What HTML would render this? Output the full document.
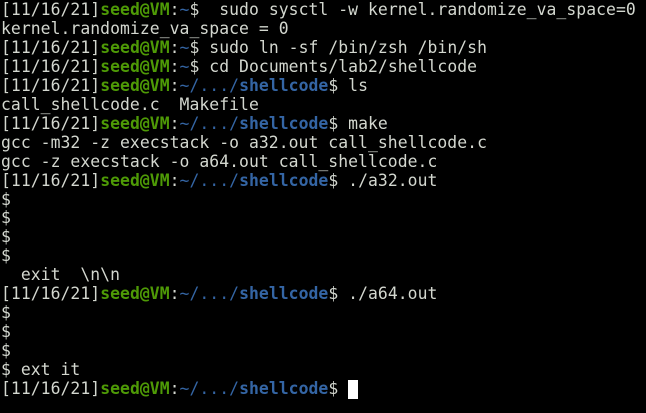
<!DOCTYPE html>
<html><head><style>
html,body{margin:0;padding:0;background:#000;width:646px;height:413px;overflow:hidden}
pre{margin:0;padding:1px 0 0 1px;font-family:"DejaVu Sans Mono","Liberation Mono",monospace;font-size:16.4px;letter-spacing:0.05px;line-height:18.95px;color:#d3d7cf;white-space:pre}
.g{color:#4e9a06;font-weight:bold}
.b{color:#3465a4}
.bb{color:#3465a4;font-weight:bold}
.c{display:inline-block;width:10px;height:19px;background:#fff;vertical-align:top}
</style></head><body><pre>[11/16/21]<span class="g">seed@VM</span>:<span class="b">~</span>$  sudo sysctl -w kernel.randomize_va_space=0
kernel.randomize_va_space = 0
[11/16/21]<span class="g">seed@VM</span>:<span class="b">~</span>$ sudo ln -sf /bin/zsh /bin/sh
[11/16/21]<span class="g">seed@VM</span>:<span class="b">~</span>$ cd Documents/lab2/shellcode
[11/16/21]<span class="g">seed@VM</span>:<span class="b">~/.../</span><span class="bb">shellcode</span>$ ls
call_shellcode.c  Makefile
[11/16/21]<span class="g">seed@VM</span>:<span class="b">~/.../</span><span class="bb">shellcode</span>$ make
gcc -m32 -z execstack -o a32.out call_shellcode.c
gcc -z execstack -o a64.out call_shellcode.c
[11/16/21]<span class="g">seed@VM</span>:<span class="b">~/.../</span><span class="bb">shellcode</span>$ ./a32.out
$
$
$
$
  exit  \n\n
[11/16/21]<span class="g">seed@VM</span>:<span class="b">~/.../</span><span class="bb">shellcode</span>$ ./a64.out
$
$
$
$ ext it
[11/16/21]<span class="g">seed@VM</span>:<span class="b">~/.../</span><span class="bb">shellcode</span>$ <span class="c"></span></pre></body></html>
